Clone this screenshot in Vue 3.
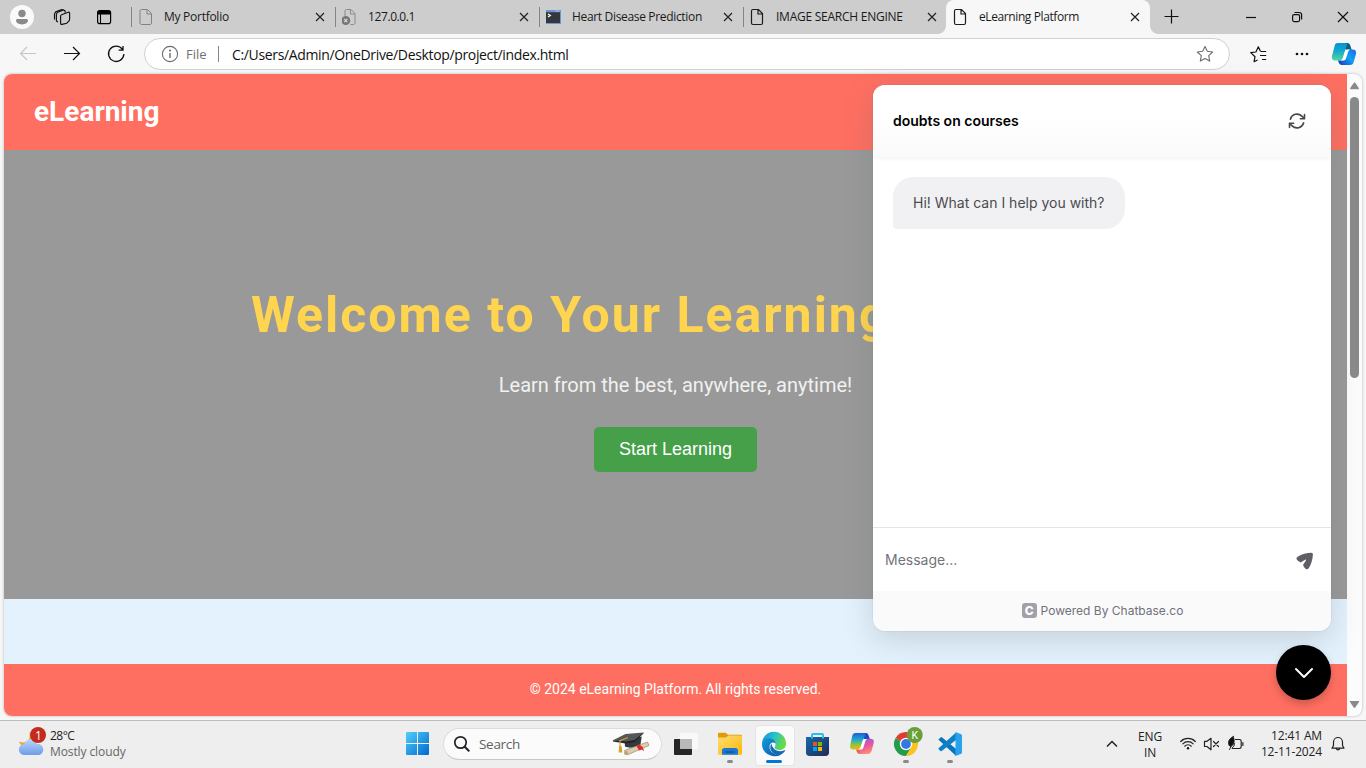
<script setup>
const tabs = [
  { title: 'My Portfolio', icon: 'page', cls: 't1' },
  { title: '127.0.0.1', icon: 'error', cls: 't2' },
  { title: 'Heart Disease Prediction', icon: 'term', cls: 't3' },
  { title: 'IMAGE SEARCH ENGINE', icon: 'dark', cls: 't4' },
  { title: 'eLearning Platform', icon: 'dark', cls: 't5', active: true },
]
</script>

<template>
  <div class="screen">
    <div class="tabbar">
      <div class="tools">
        <svg width="131" height="34" viewBox="0 0 131 34" fill="none">
          <circle cx="22" cy="17" r="12" fill="#fafafa" />
          <circle cx="22" cy="13.5" r="3.7" fill="#8a8a8a" />
          <path d="M16 20.6c0-1 .7-1.6 1.6-1.6h8.8c.9 0 1.600.6 1.600 1.600 0 2.300-2.700 3.800-6 3.800s-6-1.500-6-3.800z" fill="#8a8a8a" />
          <g stroke="#111" stroke-width="1.15" stroke-linejoin="round" fill="#cdcdcd">
            <path d="M54.500 19.500v-5.800l1.200-1.800 6-2.300 1 .5v2" />
            <path d="M58 22l-1.600-1v-7l1.200-1.800 6-2.300 1.500.8v2" />
            <path d="M61.600 14.700l6.600-2.500c.8-.3 1.400.1 1.400.9v6.400c0 .5-.2 1-.6 1.300l-2.200 2.400-4.800 1.200c-.8.2-1.400-.3-1.400-1v-7.400c0-.6.400-1.100 1-1.300z" />
          </g>
          <rect x="97.600" y="10.600" width="13" height="13" rx="2.200" stroke="#000" stroke-width="1.200" />
          <path d="M97.500 12.500a2 2 0 0 1 2-2h9a2 2 0 0 1 2 2v2h-13z" fill="#000" />
          <path d="M100.500 14v9" stroke="#000" stroke-width="1.100" />
        </svg>
      </div>
      <div v-for="t in tabs" :key="t.title" class="tab" :class="[t.cls, { active: t.active }]">
        <svg class="fav" width="18" height="18" viewBox="0 0 18 18" fill="none">
          <path v-if="t.icon === 'page'" d="M3.500 1.500h6l4 4v9.500c0 .8-.6 1.500-1.500 1.500H3.500C2.600 16.500 2 15.800 2 15V3c0-.9.6-1.500 1.500-1.500zM9 1.800V6h4.300" stroke="#828282" />
          <path v-if="t.icon === 'dark'" d="M3 1.500h5.500l4 4v9.500c0 .8-.6 1.500-1.500 1.500H3C2.100 16.500 1.500 15.800 1.500 15V3c0-.9.6-1.500 1.500-1.500zM8 1.800V6h4.300" stroke="#1b1b1b" stroke-width="1.200" />
          <g v-if="t.icon === 'error'">
            <path d="M3 8V3c0-.9.6-1.500 1.500-1.500H9l4 4v9.500c0 .8-.6 1.500-1.500 1.500h-3M8.500 1.800V6h4.300" stroke="#8a8a8a" />
            <circle cx="3.800" cy="12.500" r="4.500" fill="#777" />
            <path d="M2.200 10.900l3.200 3.200m0-3.200l-3.200 3.200" stroke="#ddd" stroke-width="1.200" />
          </g>
          <g v-if="t.icon === 'term'">
            <rect x="-1" y="2" width="16" height="14" fill="#6f94cf" />
            <rect x="0" y="4.200" width="14" height="10.800" fill="#34383c" />
            <path d="M2 6l2.300 1.500L2 9" stroke="#fff" stroke-width="1.300" />
            <path d="M9.500 3.100h4" stroke="#d8e4f7" stroke-width=".9" stroke-dasharray="1 .6" />
          </g>
        </svg>
        <span class="title">{{ t.title }}</span>
        <svg class="close" width="10" height="10" viewBox="0 0 10 10"><path d="M1 1l8 8M9 1L1 9" stroke="#222" stroke-width="1.200" /></svg>
      </div>
      <svg class="winctl" width="216" height="34" viewBox="1150 0 216 34" fill="none" stroke="#111" stroke-width="1.200">
        <path d="M1164.500 16.500h14M1171.500 9.500v14" />
        <path d="M1246 17.500h10" />
        <rect x="1292.600" y="14.600" width="7" height="7" rx="1.500" />
        <path d="M1294.500 12.500h4.700a2.400 2.400 0 0 1 2.400 2.400v4.700" />
        <path d="M1338 12l10 10M1348 12l-10 10" />
      </svg>
    </div>

    <div class="toolbar">
      <svg width="144" height="40" viewBox="0 34 144 40" fill="none" stroke-width="1.200">
        <path d="M36 53.500H20.500M27 47l-6.500 6.500L27 60" stroke="#c6c6c6" />
        <path d="M64 53.500h15.500M73 47l6.500 6.500L73 60" stroke="#111" />
        <path d="M122.500 49.300A7.700 7.700 0 1 0 123.900 54M123 46v4.200h-4.300" stroke="#111" stroke-width="1.300" />
      </svg>
      <div class="address">
        <svg width="18" height="18" viewBox="0 0 18 18" fill="none" stroke="#6c6c6c" stroke-width="1.100"><circle cx="9" cy="9" r="7.600" /><path d="M9 8v5" stroke-width="1.400" /><circle cx="9" cy="5.600" r=".5" fill="#6c6c6c" /></svg>
        <span class="file">File</span>
        <i class="bar"></i>
        <span class="url">C:/Users/Admin/OneDrive/Desktop/project/index.html</span>
        <svg class="star" width="18" height="18" viewBox="0 0 18 18" fill="none" stroke="#6c6c6c" stroke-width="1.100" stroke-linejoin="round"><path d="M9 1.400l2.300 4.900 5.400.7-4 3.700 1 5.400L9 13.500l-4.700 2.600 1-5.400-4-3.700 5.400-.7z" /></svg>
      </div>
      <svg width="136" height="40" viewBox="1230 34 136 40" fill="none">
        <defs>
          <linearGradient id="cpa" x1="0" y1="0" x2="0" y2="1"><stop offset="0" stop-color="#0b91d8" /><stop offset=".45" stop-color="#12a8cc" /><stop offset="1" stop-color="#53d79a" /></linearGradient>
          <linearGradient id="cpb" x1="0" y1="1" x2="1" y2="0"><stop offset="0" stop-color="#1b49c9" /><stop offset=".5" stop-color="#0ea2f5" /><stop offset="1" stop-color="#2564da" /></linearGradient>
        </defs>
        <path d="M1257.500 60l-3.400 1.700.9-5-4.300-4.100 5.200-.6 2.400-5.200 2.300 4.700M1261 51.500h5.200M1260 55.500h6.200M1262 59.500h4.200" stroke="#111" stroke-width="1.200" stroke-linejoin="round" />
        <g fill="#111"><circle cx="1297" cy="54" r="1.350" /><circle cx="1302" cy="54" r="1.350" /><circle cx="1307" cy="54" r="1.350" /></g>
        <path d="M1342 43h5.500c1.500 0 2.300 1 2.700 2.300l1.500 4.700h-6z" fill="#09607f" />
        <path d="M1337.500 43h8c1.300 0 1.700.8 1.300 2.200l-3.900 12.800c-.6 1.800-1.500 2.400-3 2.400h-4.700c-2.500 0-3.900-2-3.200-4.500l2.600-10c.5-2 1.500-2.900 2.900-2.900z" fill="url(#cpa)" />
        <path d="M1338 60.400h6l2 4.600h-4c-2 0-3.200-1.500-4-4.600z" fill="#164ac4" />
        <path d="M1348.500 49.500h4.200c2.700 0 3.900 1.800 3.300 4.300l-2.200 8c-.6 2.300-1.700 3.200-3.700 3.200h-7.200c-1.300 0-1.600-1-1.200-2.500l3.500-10.700c.6-1.700 1.600-2.300 3.300-2.300z" fill="url(#cpb)" />
        <path d="M1346.300 49.500h4.200c-1.300.4-2 1.200-2.400 2.500l-2 6.200c-.5 1.600-1.300 2.200-2.700 2.200h-2.600c1-.5 1.700-1.200 2-2.200l2-6.700c.3-1.100.8-1.700 1.500-2z" fill="#fff" />
      </svg>
    </div>

    <div class="content">
      <div class="viewport">
        <div class="page">
          <header class="site-head">eLearning</header>
          <section class="hero">
            <h1>Welcome to Your Learning</h1>
            <p>Learn from the best, anywhere, anytime!</p>
            <button>Start Learning</button>
          </section>
          <div class="pale"></div>
          <footer class="site-foot">© 2024 eLearning Platform. All rights reserved.</footer>
        </div>
        <div class="scroll">
          <svg width="15" height="643" viewBox="0 0 15 643"><path d="M3.300 14L7 8.500h1l3.800 5.500c.4.600 0 1.300-.5 1.300H3.800c-.6 0-.9-.7-.5-1.300z" fill="#8a8a8a" /><rect x="3" y="23" width="9" height="281" rx="4.500" fill="#8a8a8a" /><path d="M3.500 627h8c.6 0 .8.500.5 1l-3.500 5.300c-.5.700-1.500.7-2 0L3 628c-.3-.5-.1-1 .5-1z" fill="#8a8a8a" /></svg>
        </div>
      </div>

      <div class="chat">
        <div class="chat-head">
          <span>doubts on courses</span>
          <svg width="20" height="20" viewBox="0 0 24 24" fill="none" stroke="#494949" stroke-width="1.900" stroke-linecap="round" stroke-linejoin="round"><path d="M16.023 9.348h4.992V4.356M2.985 19.644v-4.992h4.992M2.985 14.652l3.181 3.183a8.250 8.250 0 0 0 13.803-3.700M4.031 9.865a8.250 8.250 0 0 1 13.803-3.700l3.181 3.182" /></svg>
        </div>
        <div class="chat-body"><div class="bubble">Hi! What can I help you with?</div></div>
        <div class="chat-input">
          <span>Message...</span>
          <svg width="18" height="18" viewBox="0 0 18 18"><path d="M15.300.8C11 .9 5.500 2.100 1.600 4.700.2 5.700.2 7.400 1.600 8.500c.9.800 1.900 1.500 3 2.100l4.500-2.900c.6-.3 1.100.3.800.8L7 12.900c.5 1.200 1.200 2.300 2 3.400.9 1.300 2.700 1.300 3.700-.1 2.600-3.800 3.900-9.200 4.200-13.500C17 1.500 16.400.8 15.300.8z" fill="#5f5f67" /></svg>
        </div>
        <div class="chat-foot"><b>C</b><span>Powered By Chatbase.co</span></div>
      </div>
      <div class="fab"><svg width="20" height="12" viewBox="0 0 20 12" fill="none" stroke="#fff" stroke-width="2" stroke-linecap="round" stroke-linejoin="round"><path d="M2 2l8 8 8-8" /></svg></div>
    </div>

    <div class="taskbar">
      <div class="weather">
        <svg width="32" height="34" viewBox="16 724 32 34">
          <defs><linearGradient id="cl" x1="0" y1="0" x2="0" y2="1"><stop offset="0" stop-color="#b9d5fb" /><stop offset="1" stop-color="#6f9ce8" /></linearGradient></defs>
          <path d="M29 731c3 7-3 13-10 9.500 1 4 5 6 10 3l5-6z" fill="#f2a623" />
          <path d="M24.500 754a5.500 5.500 0 0 1-.3-11c1-3 3.500-4.700 6.500-4.700s5.500 2 6.300 4.700c3.500-.6 6.300 2 6.300 5.500s-2.500 5.500-5.500 5.500z" fill="url(#cl)" />
          <circle cx="38" cy="734" r="8" fill="#c42b1c" />
          <text x="38.500" y="738.500" text-anchor="middle" font-family="Open Sans, sans-serif" font-size="12" fill="#fff">1</text>
        </svg>
        <div class="wtext"><span class="temp">28°C</span><span class="cloudy">Mostly cloudy</span></div>
      </div>
      <svg class="win" width="24" height="24" viewBox="0 0 24 24"><defs><linearGradient id="w" x1="0" y1="0" x2="1" y2="1"><stop offset="0" stop-color="#4fd0fb" /><stop offset="1" stop-color="#0068cc" /></linearGradient></defs><path d="M0 1q0-1 1-1h10v11H0zM12 0h10q1 0 1 1v10H12zM0 12h11v11H1q-1 0-1-1zM12 12h11v10q0 1-1 1H12z" fill="url(#w)" /></svg>
      <div class="search">
        <svg width="18" height="18" viewBox="0 0 18 18" fill="none" stroke="#222" stroke-width="1.700"><circle cx="7.500" cy="7.500" r="5.700" /><path d="M11.700 11.700l4 4" stroke-linecap="round" stroke-width="2" /></svg>
        <span>Search</span>
        <svg class="cap" width="38" height="26" viewBox="612 731 38 26">
          <path d="M624.500 740l.5 6.500c4 2 11 1.500 15.500-2l1.200-8z" fill="#35383c" />
          <path d="M612.500 740.500l13-6.500 18-1.500-9 8.500-8.500 1.500z" fill="#54575b" />
          <path d="M613 740.500l13 1 8.500-1.500 9-7.500v1l-9 8.500-9 1.500-12.500-2z" fill="#222" />
          <path d="M628 737.500l-8 3.200v8" fill="none" stroke="#d8a02f" stroke-width="1.200" /><path d="M619.300 746h2.200l.9 6.500h-3.800z" fill="#d9a024" />
          <path d="M624.500 750.500l23-8.500 1.500 3.500-22 9.500z" fill="#dccdae" stroke="#9c8765" stroke-width=".7" />
          <circle cx="626" cy="753" r="2" fill="#b6a27c" /><path d="M636.500 746l2.500 4.500 3-1 2 2-1-4-3.500-3z" fill="#d72d2d" />
        </svg>
      </div>
      <div class="apps">
        <div class="app"><svg width="28" height="28" viewBox="672 730 28 28"><rect x="674" y="739" width="18" height="16" rx="1" fill="#262626" /><rect x="680" y="733" width="18" height="16" rx="1" fill="#fafafa" opacity=".9" /><path d="M680 739h12v10h-12z" fill="#b9b9b9" /></svg></div>
        <div class="app run"><svg width="28" height="28" viewBox="716 730 28 28"><defs><linearGradient id="fo" x1="0" y1="0" x2="1" y2="1"><stop offset="0" stop-color="#ffdd70" /><stop offset="1" stop-color="#fbb70e" /></linearGradient></defs><path d="M718 740v-6c0-.7.5-1.200 1.200-1.200h6.600l2.200 2h12.500c.8 0 1.500.5 1.500 1.300v6z" fill="#df9c08" /><path d="M718 737.500h8l2.500-2h12c.8 0 1.500.5 1.500 1.500v16.500c0 .8-.5 1.300-1.300 1.300h-21.400c-.8 0-1.300-.5-1.300-1.300z" fill="url(#fo)" /><path d="M722 754.800v-4.300c0-1.500 1-2.500 2.500-2.500h11c1.500 0 2.500 1 2.500 2.500v4.300z" fill="#1a78d0" /><path d="M725.500 751.500h9v1h-9z" fill="#0c4580" /></svg></div>
        <div class="app sel"><svg width="28" height="28" viewBox="760 730 28 28">
          <defs><linearGradient id="e1" x1="0" y1="0" x2="1" y2=".35"><stop offset="0" stop-color="#168bc9" /><stop offset=".5" stop-color="#27bed5" /><stop offset="1" stop-color="#68db48" /></linearGradient><linearGradient id="e2" x1="0" y1="0" x2="1" y2="1"><stop offset="0" stop-color="#1498dc" /><stop offset="1" stop-color="#0c59a4" /></linearGradient></defs>
          <path d="M762 744a12 12 0 0 1 24-.5c.1 4-2.800 6.500-6.500 6.500-3 0-5-1-5-2.200 0-.8 1-1.300 1-3.300 0-3-3-5.200-6.500-5.200-3.800 0-6.500 2-7 4.700z" fill="url(#e1)" />
          <path d="M762 744c0-3.300 3-5.800 7-5.800 3.700 0 6.500 2.300 6.500 5.300-2.500-2-6-.5-6 3.500 0 4.500 5 8.500 11 8-8 3.500-18.500-1-18.500-11z" fill="url(#e2)" />
          <path d="M771.500 743.500c-3.500 5 1 12 8 11.800 2.300-.7 4.300-2.300 5.500-4.200.5-.8 0-1.100-.7-.8-5.500 2.500-12-.3-12.800-6.800z" fill="#1769b8" />
        </svg></div>
        <div class="app"><svg width="28" height="28" viewBox="804 730 28 28"><defs><linearGradient id="st" x1="0" y1="0" x2="1" y2="1"><stop offset="0" stop-color="#146ba9" /><stop offset="1" stop-color="#242a56" /></linearGradient></defs><path d="M812 739v-4c0-.7.400-1 1-1h9c.6 0 1 .3 1 1v4" fill="none" stroke="#29bdf2" stroke-width="2" /><path d="M806 737h23v15.500c0 2-1.200 3.500-3.500 3.500h-16c-2.300 0-3.500-1.500-3.500-3.500z" fill="url(#st)" /><path d="M812 737v1.500M823 737v1.500" stroke="#29bdf2" stroke-width="2" /><path d="M813 742h4v4h-4z" fill="#f25022" /><path d="M818 742h4v4h-4z" fill="#7fba00" /><path d="M813 747h4v4h-4z" fill="#00a4ef" /><path d="M818 747h4v4h-4z" fill="#ffb900" /></svg></div>
        <div class="app"><svg width="28" height="28" viewBox="848 730 28 28"><defs><linearGradient id="ca" x1="0" y1="0" x2="0" y2="1"><stop offset="0" stop-color="#1f5ed8" /><stop offset=".4" stop-color="#20a8d1" /><stop offset=".7" stop-color="#8dc43b" /><stop offset="1" stop-color="#f1bb15" /></linearGradient><linearGradient id="cb" x1=".3" y1="0" x2=".6" y2="1"><stop offset="0" stop-color="#9b58e8" /><stop offset=".5" stop-color="#eb5899" /><stop offset="1" stop-color="#ff9470" /></linearGradient></defs>
          <path d="M860 733h6c1.300 0 2 .8 2.400 2l1.600 4.500h-6z" fill="#1948c4" />
          <path d="M855.500 733h8.500c1.200 0 1.700.7 1.200 2l-4.300 12c-.6 1.600-1.500 2.500-3 2.500H853c-2.200 0-3.500-1.700-2.800-4l2-9.500c.5-2 1.500-3 3.300-3z" fill="url(#ca)" />
          <path d="M856 749.500h5l1.500 4.500H860c-2 0-3.200-1.500-4-4.500z" fill="#ef6348" />
          <path d="M866.500 738.800h4c2.500 0 3.800 1.500 3.200 4l-2 7.700c-.6 2.200-1.800 3.500-3.800 3.500h-7c-1.300 0-1.600-1-1.200-2.300l3.500-10.700c.5-1.500 1.600-2.200 3.300-2.200z" fill="url(#cb)" />
          <path d="M864 739h3.500c-1.200.4-1.800 1-2.200 2.200l-1.800 6c-.5 1.600-1.200 2.300-2.600 2.300h-2.400c1-.5 1.600-1.200 2-2.200l2-6.300c.3-1 .8-1.700 1.500-2z" fill="#fff" />
        </svg></div>
        <div class="app run"><svg class="chrome" width="36" height="36" viewBox="888 726 36 36"><path d="M895.600 738a12 12 0 0 1 20.800 0L906 744z" fill="#e43b2e" /><path d="M895.600 738a12 12 0 0 0 10.400 18l5.500-9-5.500-3z" fill="#269b49" /><path d="M906 756a12 12 0 0 0 10.400-18H906l5.400 9z" fill="#f9c421" /><circle cx="906" cy="744" r="6.200" fill="#fff" /><circle cx="906" cy="744" r="4.900" fill="#3477e3" /><circle cx="914.700" cy="735" r="8" fill="#689f38" /><text x="914.700" y="739" text-anchor="middle" font-family="Roboto, sans-serif" font-size="10.500" fill="#fff">K</text></svg></div>
        <div class="app run"><svg width="28" height="28" viewBox="936 730 28 28"><path d="M939.500 738.500l2-1.300 14.500 12v6.500z" fill="#2b9ce2" /><path d="M939.500 738.500l-1.200 1 17.700 16.200V749l-14.500-12z" fill="#0876bb" /><path d="M938.300 748.500L956 732.500v7.500l-14 10.800c-.8.6-1.500.5-2.300-.2z" fill="#0d80c8" /><path d="M955.500 732l5.700 2.300c.5.200.8.700.8 1.200v17c0 .6-.3 1-.8 1.300l-5.700 2.200z" fill="#27a2ed" /></svg></div>
      </div>
      <div class="tray">
        <svg class="up" width="12" height="8" viewBox="0 0 12 8" fill="none" stroke="#222" stroke-width="1.500"><path d="M1 6.500l5-5 5 5" /></svg>
        <div class="lang"><span>ENG</span><span>IN</span></div>
        <svg class="sys" width="66" height="18" viewBox="1179 735 66 18" fill="none" stroke="#222" stroke-width="1.200" stroke-linecap="round">
          <path d="M1180.700 741.500a10.300 10.300 0 0 1 14.600 0M1182.800 743.900a7.300 7.300 0 0 1 10.400 0M1184.700 746.200a4.700 4.700 0 0 1 6.600 0" /><circle cx="1188" cy="748.300" r="1.200" fill="#111" stroke="none" />
          <path d="M1204.500 741.300h2.500l4-3v11.500l-4-3.300h-2.500z" stroke-linejoin="round" /><path d="M1213.500 741.500l5 5m0-5l-5 5" />
          <path d="M1235.500 739.500h4c1 0 1.700.7 1.700 1.700v5.600c0 1-.7 1.700-1.700 1.700h-7M1242.900 742.500v3" /><path d="M1233.300 736.500c-3.300 1.500-4.800 3.500-4.800 6.500 0 1.700.7 3 2 3.500 3.300-1 4.800-5 2.800-10z" fill="#111" stroke-width=".8" /><path d="M1229.500 749.500l3.500-7M1234.500 743.500c0 2-.8 3.500-2.500 4.500" stroke-width="1" />
        </svg>
        <div class="clock"><span class="time">12:41 AM</span><span class="date">12-11-2024</span></div>
        <svg class="bell" width="14" height="16" viewBox="0 0 14 16" fill="none" stroke="#222" stroke-width="1.200" stroke-linejoin="round"><path d="M2.500 9.500V6a4.500 4.500 0 0 1 9 0v3.500l1.500 2.700H1zM5.200 12.500a1.900 1.900 0 0 0 3.600 0" /></svg>
      </div>
    </div>
  </div>
</template>

<style>
body { margin: 0; overflow: hidden; }
</style>

<style scoped>
* { box-sizing: border-box; }
svg { display: block; flex: none; }
.screen { width: 1366px; height: 768px; display: flex; flex-direction: column; background: #f7f7f7; font-family: "Open Sans", "Noto Sans", sans-serif; overflow: hidden; white-space: nowrap; }
.tabbar { height: 34px; flex: none; display: flex; background: #cdcdcd; }
.tools { width: 131px; }
.tab { position: relative; width: 204px; height: 34px; display: flex; align-items: center; padding-left: 6px; border-left: 1px solid transparent; font-size: 12px; color: #1a1a1a; }
.tab::after { content: ""; position: absolute; left: -1px; top: 7px; width: 1px; height: 20px; background: #858585; }
.tab .title { width: 148px; margin-left: 8px; overflow: hidden; line-height: 20px; }
.tab .close { margin-left: 3px; }
.t4 { width: 203px; }
.t1 .title { letter-spacing: -.27px; }
.t2 .title { letter-spacing: -.4px; }
.t3 .title { letter-spacing: -.33px; }
.t4 .title { letter-spacing: -.25px; }
.t5 .title { letter-spacing: -.4px; }
.tab.active { background: #f7f7f7; border-radius: 8px 8px 0 0; }
.tab.active::after { display: none; }
.tab.active::before { content: ""; position: absolute; left: -9px; right: -8px; bottom: 0; height: 8px; background: radial-gradient(circle at 0 0, transparent 7.500px, #f7f7f7 8px) left / 8px 8px no-repeat, radial-gradient(circle at 100% 0, transparent 7.500px, #f7f7f7 8px) right / 8px 8px no-repeat; }
.winctl { width: 216px; }
.toolbar { height: 40px; flex: none; display: flex; }
.address { width: 1086px; height: 32px; margin-top: 4px; display: flex; align-items: center; border: 1px solid #d0d0d0; border-radius: 16px; background: #fff; padding: 0 15px 0 16px; font-size: 13.500px; }
.file { width: 32px; margin-left: 7px; color: #707070; font-size: 13px; }
.bar { width: 1px; height: 16px; background: #858585; margin: 0 13px 0 0; }
.url { color: #111; letter-spacing: -.35px; font-size: 14px; }
.star { margin-left: auto; }
.content { position: relative; height: 646px; flex: none; padding: 0 4px; }
.viewport { width: 1358px; height: 642px; display: flex; border-radius: 8px; overflow: hidden; background: #fcfcfc; box-shadow: 0 0 3px rgba(0,0,0,.28); }
.page { width: 1343px; display: flex; flex-direction: column; font-family: Roboto, sans-serif; }
.scroll { width: 15px; }
.site-head { height: 76px; flex: none; background: #ff6f61; color: #fff; font-size: 28px; font-weight: 700; line-height: 76px; padding-left: 30px; }
.hero { height: 449px; flex: none; background: #999; display: flex; flex-direction: column; align-items: center; padding-top: 135px; }
.hero h1 { align-self: stretch; margin: 0 0 27px 247px; font-size: 50px; letter-spacing: 2px; line-height: 60px; color: #ffd54f; }
.hero p { margin: 0 0 28px; font-size: 20px; line-height: 27px; color: #f1f1f1; }
.hero button { width: 163px; height: 45px; padding: 0; border: 0; border-radius: 5px; background: #45a049; color: #fff; font: 18px "Liberation Sans", sans-serif; }
.pale { height: 65px; flex: none; background: #e3f2fd; }
.site-foot { height: 52px; background: #ff6f61; color: #fff; text-align: center; font-size: 14px; line-height: 51px; }
.chat { position: absolute; left: 873px; top: 11px; width: 458px; height: 546px; border-radius: 12px; overflow: hidden; background: #fff; box-shadow: 0 0 1px rgba(100,110,120,.6), 0 8px 30px rgba(90,100,105,.24); display: flex; flex-direction: column; font-family: Inter, sans-serif; }
.chat-head { height: 72px; flex: none; display: flex; align-items: center; justify-content: space-between; padding: 0 24px 0 20px; font-size: 14px; font-weight: 600; color: #000; background: linear-gradient(#fff 45%, #fafafa); box-shadow: 0 1px 5px rgba(0,0,0,.06); }
.chat-head span { padding-bottom: 2px; }
.chat-body { height: 370px; flex: none; padding: 20px; }
.bubble { display: inline-block; height: 52px; padding: 0 20px; border-radius: 20px 20px 20px 4px; background: #f1f1f3; color: #4b4b50; font-size: 14px; line-height: 52px; }
.chat-input { height: 64px; flex: none; border-top: 1px solid #e4e4e7; display: flex; align-items: center; justify-content: space-between; padding: 3px 17px 0 12px; font-size: 14px; color: #73737b; }
.chat-input span { padding-bottom: 3px; }
.chat-foot { height: 40px; display: flex; align-items: center; justify-content: center; background: #fafafa; color: #71717a; font-size: 12px; padding: 0 0 2px 1px; }
.chat-foot b { width: 15px; height: 15px; margin-right: 4px; border-radius: 3px; background: #a1a1aa; color: #fff; font-size: 12px; font-weight: 800; line-height: 15px; text-align: center; }
.fab { position: absolute; left: 1276px; top: 571px; width: 55px; height: 55px; border-radius: 50%; background: #000; display: flex; align-items: center; justify-content: center; box-shadow: 0 4px 8px rgba(0,0,0,.2); }
.taskbar { height: 48px; flex: none; border-top: 1px solid #bdbdbd; background: #eee; display: flex; align-items: center; color: #222; font-size: 12px; padding-bottom: 1px; }
.weather { width: 406px; padding-left: 16px; display: flex; align-items: center; margin-bottom: 5px; }
.wtext { display: flex; flex-direction: column; line-height: 16px; margin: 5px 0 0 2px; font-size: 12px; }
.temp { letter-spacing: -.5px; }
.cloudy { color: #666; letter-spacing: -.1px; }
.search { width: 219px; height: 32px; margin-left: 13px; border: 1px solid #dcdcdc; border-bottom-color: #c9c9c9; border-radius: 16px; background: #fbfbfb; display: flex; align-items: center; padding: 0 11px 0 9px; font-size: 13.500px; color: #5f5f5f; }
.search span { margin-left: 8px; letter-spacing: -.3px; }
.cap { margin-left: auto; }
.apps { display: flex; }
.app { position: relative; width: 44px; height: 46px; display: flex; align-items: center; justify-content: center; }
.app:first-child { width: 46px; padding-left: 2px; }
.app svg { position: relative; }
.chrome { margin: 0 4px; }
.app.sel::before { content: ""; position: absolute; left: 3px; top: 4px; width: 38px; height: 39px; border-radius: 4px; background: #fafafa; border: 1px solid #e4e4e4; }
.app.run::after, .app.sel::after { content: ""; position: absolute; left: 19px; bottom: 4px; width: 6px; height: 3px; border-radius: 2px; background: #8a8a8a; }
.app.sel::after { left: 14px; width: 16px; background: #0078d4; }
.tray { margin-left: auto; display: flex; align-items: center; padding-right: 21px; }
.lang { width: 40px; margin-left: 12px; display: flex; flex-direction: column; align-items: center; line-height: 16px; letter-spacing: -.1px; padding-top: 1px; }
.sys { margin-left: 9px; }
.clock { width: 76px; margin-left: 1px; display: flex; flex-direction: column; align-items: flex-end; line-height: 16px; letter-spacing: -.15px; }
.bell { margin-left: 9px; }
</style>
